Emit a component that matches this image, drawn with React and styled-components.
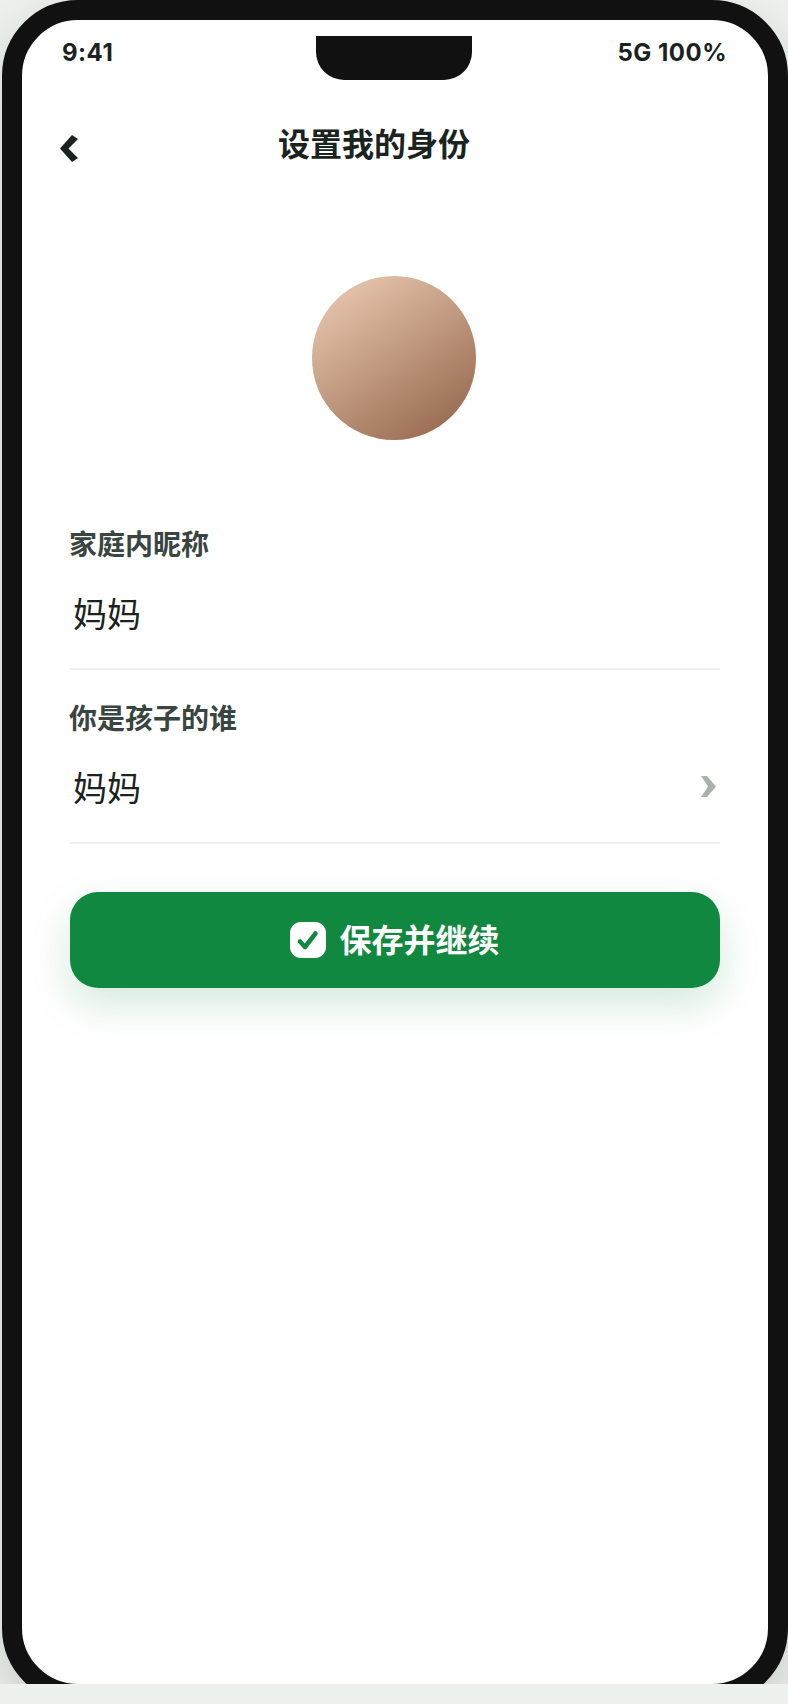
import React from "react";
import styled, { createGlobalStyle } from "styled-components";

const Global = createGlobalStyle`
  html, body { margin: 0; padding: 0; background: #eef2ef; }
  body { font-family: Inter, "Noto Sans CJK SC", sans-serif; }
  * { box-sizing: border-box; }
`;

const Stage = styled.div`
  width: 788px;
  height: 1684px;
  padding-left: 2px;
  overflow: hidden;
  background: #eef2ef;
`;

const Phone = styled.div`
  position: relative;
  width: 786px;
  height: 1704px;
  border: 20px solid #111111;
  border-radius: 76px;
  background: #ffffff;
  overflow: hidden;
  box-shadow: 0 24px 60px rgba(20, 30, 25, 0.18);
`;

const Notch = styled.div`
  position: absolute;
  top: 16px;
  left: 294px;
  width: 156px;
  height: 44px;
  background: #111111;
  border-radius: 0 0 28px 28px;
`;

const StatusBar = styled.div`
  height: 64px;
  padding: 0 41px 0 40px;
  display: flex;
  align-items: center;
  justify-content: space-between;
  font-size: 24px;
  font-weight: 700;
  letter-spacing: 0.5px;
  color: #1a2320;
`;

const NavBar = styled.div`
  height: 120px;
  padding: 0 48px 0 38px;
  display: flex;
  align-items: center;
  justify-content: space-between;
`;

const BackIcon = styled.svg`
  width: 18px;
  height: 27px;
  margin-top: 8px;
`;

const Title = styled.h1`
  margin: 2px 0 0;
  font-size: 32px;
  font-weight: 700;
  line-height: 44px;
  color: #1a2320;
`;

const NavSpacer = styled.div`
  width: 50px;
`;

const Content = styled.div`
  padding: 0 48px;
  display: flex;
  flex-direction: column;
`;

const Avatar = styled.div`
  align-self: center;
  width: 164px;
  height: 164px;
  margin: 72px 2px 56px 0;
  border-radius: 50%;
  background: linear-gradient(145deg, #f0d0b8 0%, #8e6045 100%);
`;

const Field = styled.div`
  padding: 29px 0 9px;
  border-bottom: 2px solid #eeeeee;
`;

const Label = styled.div`
  margin-left: -1px;
  font-size: 28px;
  font-weight: 700;
  line-height: 40px;
  color: #3a4541;
`;

const ValueRow = styled.div`
  height: 94px;
  padding: 0 2px 0 3px;
  display: flex;
  align-items: center;
  justify-content: space-between;
  font-size: 34px;
  font-weight: 400;
  color: #1a2320;
`;

const ChevronIcon = styled.svg`
  width: 15px;
  height: 21px;
  margin: 1px 2px 0 0;
`;

const SaveButton = styled.button`
  margin-top: 48px;
  height: 96px;
  border: 0;
  border-radius: 28px;
  background: #11883f;
  color: #ffffff;
  display: flex;
  align-items: center;
  justify-content: center;
  gap: 13px;
  font-family: inherit;
  font-size: 32px;
  font-weight: 700;
  box-shadow: 0 16px 40px rgba(18, 135, 63, 0.18);
`;

const ButtonLabel = styled.span`
  margin-top: -4px;
`;

const CheckBadge = styled.svg`
  width: 36px;
  height: 36px;
`;

export default function App() {
  return (
    <>
      <Global />
      <Stage>
        <Phone>
          <Notch />
          <StatusBar>
            <span>9:41</span>
            <span>5G 100%</span>
          </StatusBar>
          <NavBar>
            <BackIcon viewBox="0 0 18 27">
              <polygon points="12,0 18,4 8.5,13.5 18,23 12,27 0,13.5" fill="#1a2320" />
            </BackIcon>
            <Title>设置我的身份</Title>
            <NavSpacer />
          </NavBar>
          <Content>
            <Avatar />
            <Field>
              <Label>家庭内昵称</Label>
              <ValueRow>妈妈</ValueRow>
            </Field>
            <Field>
              <Label>你是孩子的谁</Label>
              <ValueRow>
                妈妈
                <ChevronIcon viewBox="0 0 15 21">
                  <polygon points="0,0 6,0 15,10.5 6,21 0,21 7,10.5" fill="#a9b2ad" />
                </ChevronIcon>
              </ValueRow>
            </Field>
            <SaveButton>
              <CheckBadge viewBox="0 0 36 36">
                <rect width="36" height="36" rx="11" fill="#ffffff" />
                <path d="M10 19.5 L15 25 L25.5 11.5" fill="none" stroke="#11883f" strokeWidth="4.5" strokeLinecap="round" strokeLinejoin="round" />
              </CheckBadge>
              <ButtonLabel>保存并继续</ButtonLabel>
            </SaveButton>
          </Content>
        </Phone>
      </Stage>
    </>
  );
}
